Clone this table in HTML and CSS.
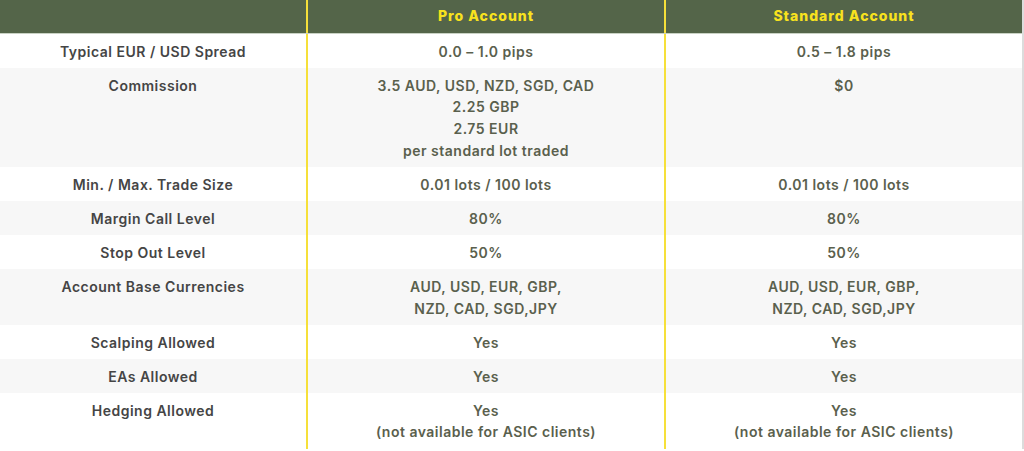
FILE: index.html
```html
<!DOCTYPE html>
<html>
<head>
<meta charset="utf-8">
<link rel="stylesheet" href="styles.css">
</head>
<body>
<div class="table">
  <div class="row head">
    <div class="cell"></div>
    <div class="cell col">Pro Account</div>
    <div class="cell col">Standard Account</div>
  </div>
  <div class="row">
    <div class="cell label">Typical EUR / USD Spread</div>
    <div class="cell col">0.0 – 1.0 pips</div>
    <div class="cell col">0.5 – 1.8 pips</div>
  </div>
  <div class="row alt">
    <div class="cell label">Commission</div>
    <div class="cell col">3.5 AUD, USD, NZD, SGD, CAD<br>2.25 GBP<br>2.75 EUR<br>per standard lot traded</div>
    <div class="cell col">$0</div>
  </div>
  <div class="row">
    <div class="cell label">Min. / Max. Trade Size</div>
    <div class="cell col">0.01 lots / 100 lots</div>
    <div class="cell col">0.01 lots / 100 lots</div>
  </div>
  <div class="row alt">
    <div class="cell label">Margin Call Level</div>
    <div class="cell col">80%</div>
    <div class="cell col">80%</div>
  </div>
  <div class="row">
    <div class="cell label">Stop Out Level</div>
    <div class="cell col">50%</div>
    <div class="cell col">50%</div>
  </div>
  <div class="row alt">
    <div class="cell label">Account Base Currencies</div>
    <div class="cell col">AUD, USD, EUR, GBP,<br>NZD, CAD, SGD,JPY</div>
    <div class="cell col">AUD, USD, EUR, GBP,<br>NZD, CAD, SGD,JPY</div>
  </div>
  <div class="row">
    <div class="cell label">Scalping Allowed</div>
    <div class="cell col">Yes</div>
    <div class="cell col">Yes</div>
  </div>
  <div class="row alt">
    <div class="cell label">EAs Allowed</div>
    <div class="cell col">Yes</div>
    <div class="cell col">Yes</div>
  </div>
  <div class="row">
    <div class="cell label">Hedging Allowed</div>
    <div class="cell col">Yes<br>(not available for ASIC clients)</div>
    <div class="cell col">Yes<br>(not available for ASIC clients)</div>
  </div>
</div>
</body>
</html>
```

FILE: styles.css
```css
* { box-sizing: border-box; }
html, body { margin: 0; padding: 0; background: #ffffff; }
body {
  font-family: Inter, "Open Sans", "Liberation Sans", sans-serif;
  font-size: 14px;
  font-weight: 600;
}
.table {
  width: 1024px;
  border-right: 2px solid #dcdcdc;
}
.row {
  display: grid;
  grid-template-columns: 306px 358px 358px;
  background: #ffffff;
}
.row.alt { background: #f7f7f7; }
.cell {
  padding: 6.5px 10px 5.75px;
  line-height: 21.75px;
  text-align: center;
  color: #5a604d;
  letter-spacing: 0.5px;
}
.cell.label { color: #454545; }
.cell.col { border-left: 2px solid #f6e03a; }
.head {
  background: #546549;
  border-bottom: 1px solid #c9d2c4;
}
.head .cell {
  height: 33px;
  padding: 5px 10px;
  color: #f8e21e;
  font-weight: 800;
  letter-spacing: 1px;
}
```
